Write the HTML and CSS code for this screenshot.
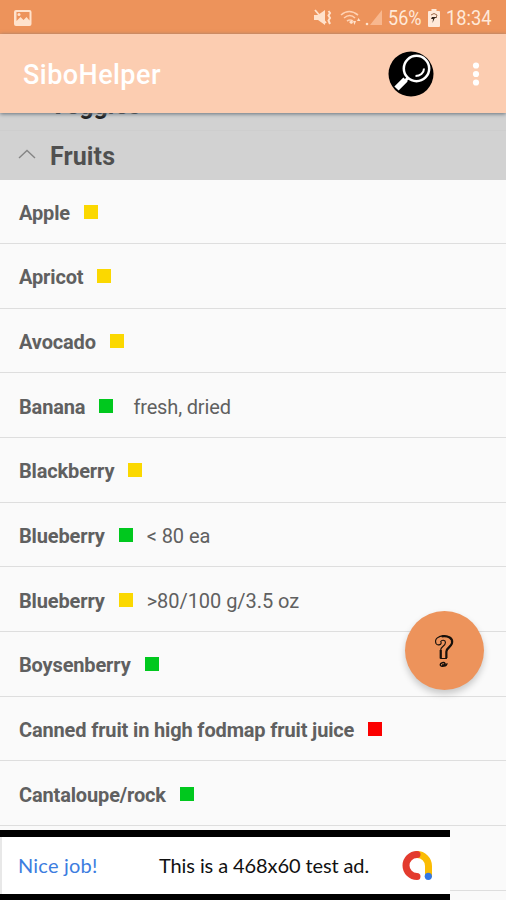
FILE: index.html
```html
<!DOCTYPE html>
<html lang="en">
<head>
<meta charset="utf-8">
<title>SiboHelper</title>
<link rel="stylesheet" href="styles.css">
</head>
<body>
<div class="screen">
  <header class="status">
    <svg class="picture" width="18" height="16" viewBox="0 0 18 16"><path fill="#ffe2cc" fill-rule="evenodd" d="M2 0h13.500a2 2 0 0 1 2 2v12a2 2 0 0 1-2 2H2a2 2 0 0 1-2-2V2a2 2 0 0 1 2-2zM2.500 2v9l4-4 3 3 3-3 3 3.500V2z"/><circle cx="5" cy="4.500" r="1.500" fill="#ffe2cc"/></svg>
    <svg class="signals" width="72" height="20" viewBox="0 0 72 20">
      <path fill="#ffe2cc" d="M1 7h4l7-5v15l-7-5H1z"/>
      <path d="M2 2l11 13" fill="none" stroke="#ffe2cc" stroke-width="1.800"/>
      <path d="M15.500 3l1.500 2-1.500 2.500L17 10l-1.500 2.500L17 16" fill="none" stroke="#ffe2cc" stroke-width="2"/>
      <g fill="none" stroke="#ffd2b3" stroke-width="1.600"><path d="M28 7q8-7 17 0M31 10q6-5 11 0M34 13q3-2 6 0"/></g>
      <path fill="#ffe2cc" d="M36 14l3-2 1 3-2 1zM40 13h3l-1.500 4zM44 13l1.500-3 2 3z"/>
      <path fill="#f8b78e" d="M57 17h12V2z"/><circle cx="54" cy="16" r="1.300" fill="#ffe2cc"/>
    </svg>
    <span class="percent">56%</span>
    <svg class="battery" width="12" height="18" viewBox="0 0 12 18"><path fill="#ffe9d9" d="M3.500 0h5v2H11a1 1 0 0 1 1 1v14a1 1 0 0 1-1 1H1a1 1 0 0 1-1-1V3a1 1 0 0 1 1-1h2.500z"/><path d="M3 6q3-3 6 0M9 6L8 9" fill="none" stroke="#9c6b4c"/><path fill="#35261d" d="M4 8h5l-2.500 1.500L4.500 14l.5-4H3z"/></svg>
    <span class="clock">18:34</span>
  </header>
  <div class="toolbar">
    <h1>SiboHelper</h1>
    <svg class="search" width="46" height="46" viewBox="0 0 46 46"><circle cx="23" cy="23" r="22.500"/><circle cx="28.500" cy="17.500" r="12.700" fill="none" stroke="#fff" stroke-width="2.500"/><path d="M36 17.500c0 4.500-4 7.500-8.500 7.500" fill="none" stroke="#fff" stroke-width="2"/><path d="M20 27L17 30" stroke="#fff" stroke-width="3"/><path d="M17.500 28.500L8.500 37.500" stroke="#fff" stroke-width="6"/></svg>
    <svg class="more" width="8" height="26" viewBox="0 0 8 26" fill="#fff"><circle cx="4" cy="4.500" r="3.100"/><circle cx="4" cy="13" r="3.100"/><circle cx="4" cy="21.500" r="3.100"/></svg>
  </div>
  <main>
    <div class="group previous"><span>Veggies</span></div>
    <div class="group"><svg width="18" height="10" viewBox="0 0 18 10"><path d="M1 9l8-7.500L17 9" fill="none" stroke="#858585" stroke-width="1.400"/></svg><h2>Fruits</h2></div>
    <ul>
      <li><b>Apple</b><i class="mid"></i></li>
      <li><b>Apricot</b><i class="mid"></i></li>
      <li><b>Avocado</b><i class="mid"></i></li>
      <li><b>Banana</b><i class="low"></i><span class="note wide">fresh, dried</span></li>
      <li><b>Blackberry</b><i class="mid"></i></li>
      <li><b>Blueberry</b><i class="low"></i><span class="note">&lt; 80 ea</span></li>
      <li><b>Blueberry</b><i class="mid"></i><span class="note">&gt;80/100 g/3.5 oz</span></li>
      <li><b>Boysenberry</b><i class="low"></i></li>
      <li><b>Canned fruit in high fodmap fruit juice</b><i class="high"></i></li>
      <li><b>Cantaloupe/rock</b><i class="low"></i></li>
      <li></li>
    </ul>
  </main>
  <div class="fab"><svg width="23" height="34" viewBox="0 0 24 36" fill="none" stroke="#17100b" stroke-linejoin="round"><path stroke-width="1.200" d="M3 10C1 5 6 2 11 2c7 0 10 4 9 8-1 5-6 5-6 9v7H8v-9c0-4 5-4 5-8 0-3-4-3-5-1 2 3-3 5-5 2z"/><path stroke-width="2.300" d="M9 2.500c7-1 12 2 11 7-.5 4-6 5-6 9v7M8 17v9"/><path stroke-width="1.500" d="M14.500 31c1 3-7 4.500-7 1.500 0-2 4-3 5-1.500s-2 2-3 1.500"/></svg></div>
  <aside class="ad"><span class="praise">Nice job!</span><span class="message">This is a 468x60 test ad.</span>
    <svg width="31" height="31" viewBox="0 0 31 31" fill="none" stroke-width="7" stroke-linecap="round"><path stroke="#fbbc04" d="M15 4.500A11.500 11.500 0 0 1 26.500 16v9"/><path stroke="#e33b2e" d="M15 4.500a11 11 0 0 0 0 22"/><circle cx="26.300" cy="26.300" r="3.600" fill="#3478e5"/></svg>
  </aside>
</div>
</body>
</html>
```
FILE: styles.css
```css
* { box-sizing: border-box; }
body { margin: 0; font-family: Roboto, "Liberation Sans", sans-serif; }
.screen { position: relative; width: 506px; height: 900px; overflow: hidden; background: #fafafa; }
svg { display: block; flex: none; }
.status { height: 34px; background: #ed935b; display: flex; align-items: center; color: #ffe9d9; font-size: 21px; line-height: 34px; padding: 1px 0 0 14px; }
.signals { margin-left: 281px; }
.percent { width: 35px; margin-left: 3px; transform: scaleX(.86); transform-origin: left; white-space: nowrap; }
.battery { margin-left: 5px; }
.clock { width: 46px; margin-left: 6px; transform: scaleX(.87); transform-origin: left; white-space: nowrap; }
.toolbar { position: relative; z-index: 1; height: 79px; background: #fccdb1; display: flex; align-items: center; padding-left: 23px; box-shadow: 0 1px 4px #66717b; }
h1 { margin: 3px 0 0; width: 365px; color: #fff; font-size: 27px; font-weight: 500; line-height: 32px; letter-spacing: .45px; }
.more { margin-left: 38px; }
.group { height: 49px; background: #d2d2d2; display: flex; align-items: center; padding-left: 18px; color: #505050; }
.group.previous { height: 17.500px; padding-left: 50px; align-items: flex-end; border-bottom: 1px solid #cecece; color: #222; font-size: 25px; font-weight: 700; line-height: 30px; }
.previous span { margin-bottom: 8.500px; }
h2 { margin: 3px 0 0 14px; font-size: 25px; font-weight: 700; line-height: 30px; letter-spacing: .1px; }
.group svg { margin-top: -3px; }
ul { list-style: none; margin: 0; padding: 0; }
li { height: 64.650px; display: flex; align-items: center; padding: 3px 19px 0; border-bottom: 1.500px solid #dedede; color: #606060; font-size: 20px; line-height: 24px; white-space: nowrap; }
b { font-weight: 700; letter-spacing: -.15px; }
i { width: 14px; height: 14px; margin: -2px 0 0 14px; }
.mid { background: #fbd800; }
.low { background: #00c81e; }
.high { background: #fb0000; }
.note { margin-left: 14px; letter-spacing: -.05px; }
.note.wide { margin-left: 20px; letter-spacing: -.15px; }
.fab { position: absolute; left: 405px; top: 611px; width: 79px; height: 79px; border-radius: 50%; background: #ed935b; box-shadow: 0 4px 7px rgba(0,0,0,.2); display: flex; align-items: center; justify-content: center; }
.ad { position: absolute; left: 0; top: 830px; width: 450px; height: 70px; border-top: 7px solid #000; border-bottom: 6px solid #000; background: #fff; box-shadow: inset 2px 0 #e8e8e8; display: flex; align-items: center; padding-left: 18px; font-family: Lato, sans-serif; font-size: 20px; line-height: 24px; white-space: nowrap; }
.praise { width: 141px; margin-top: -2px; color: #3c7de0; letter-spacing: .2px; }
.message { width: 243px; margin-top: -2px; color: #111; letter-spacing: -.1px; }
```
